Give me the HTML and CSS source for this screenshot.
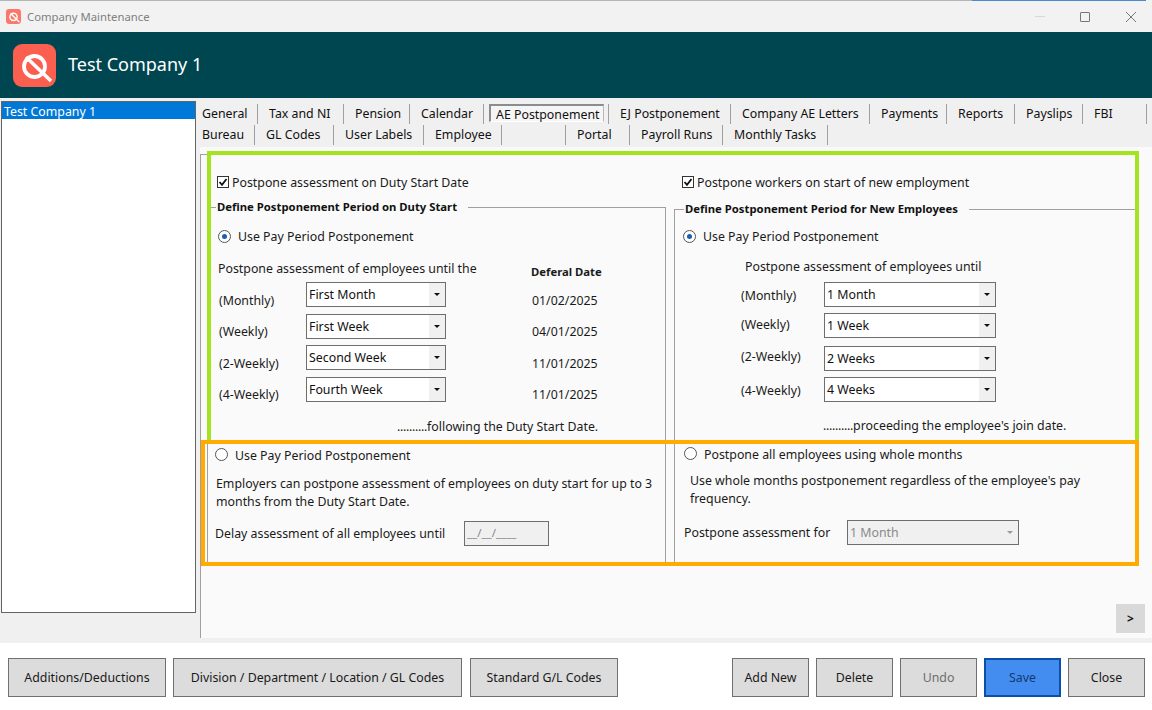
FILE: index.html
```html
<!DOCTYPE html>
<html lang="en">
<head>
    <meta charset="UTF-8">
    <meta name="viewport" content="width=device-width, initial-scale=1.0">
    <title>Company Maintenance</title>
    <link rel="stylesheet" href="styles.css">
</head>
<body>
    <div class="window">
        <div class="top-strip"></div>
        <div class="titlebar">
            <svg class="title-icon" viewBox="0 0 43 43">
                <rect width="43" height="43" rx="9" fill="#f9786a"/>
                <circle cx="21.5" cy="22.5" r="10.5" fill="none" stroke="#fff" stroke-width="4"/>
                <path d="M13 13 L38 37" stroke="#fff" stroke-width="4"/>
            </svg>
            <span class="title-text">Company Maintenance</span>
            <div class="window-controls">
                <span class="win-min"></span>
                <span class="win-max"></span>
                <svg class="win-close" viewBox="0 0 10 10"><path d="M0 0 L10 10 M10 0 L0 10" stroke="#777" stroke-width="1"/></svg>
            </div>
        </div>

        <header class="company-header">
            <svg class="company-logo" viewBox="0 0 43 43">
                <rect width="43" height="43" rx="9" fill="#fb5f50"/>
                <circle cx="21.5" cy="22.5" r="10.5" fill="none" stroke="#fff" stroke-width="3.8"/>
                <path d="M13 13 L38 37" stroke="#fff" stroke-width="3.5"/>
            </svg>
            <h1>Test Company 1</h1>
        </header>

        <main class="main">
            <aside class="company-list">
                <div class="company-item">Test Company 1</div>
            </aside>

            <section class="content">
                <nav class="tabs tabs-first">
                    <a class="tab">General</a>
                    <a class="tab">Tax and NI</a>
                    <a class="tab">Pension</a>
                    <a class="tab">Calendar</a>
                    <a class="tab tab-active"><span>AE Postponement</span></a>
                    <a class="tab">EJ Postponement</a>
                    <a class="tab">Company AE Letters</a>
                    <a class="tab">Payments</a>
                    <a class="tab">Reports</a>
                    <a class="tab">Payslips</a>
                    <a class="tab">FBI</a>
                </nav>
                <nav class="tabs tabs-second">
                    <a class="tab">Bureau</a>
                    <a class="tab">GL Codes</a>
                    <a class="tab">User Labels</a>
                    <a class="tab">Employee</a>
                    <a class="tab"></a>
                    <a class="tab">Portal</a>
                    <a class="tab">Payroll Runs</a>
                    <a class="tab">Monthly Tasks</a>
                </nav>

                <div class="panel">
                    <div class="column column-left">
                        <label class="check-row">
                            <svg class="checkbox" viewBox="0 0 12 12"><rect x="0.5" y="0.5" width="11" height="11" fill="#fff" stroke="#333"/><path d="M2.5 6 L5 8.8 L9.5 3" fill="none" stroke="#111" stroke-width="1.8"/></svg>
                            Postpone assessment on Duty Start Date
                        </label>
                        <fieldset class="group">
                            <legend>Define Postponement Period on Duty Start</legend>

                            <div class="radio-row"><span class="radio radio-on"></span>Use Pay Period Postponement</div>

                            <div class="period-head">
                                <span>Postpone assessment of employees until the</span>
                                <strong>Deferal Date</strong>
                            </div>
                            <div class="period-row">
                                <span class="period-label">(Monthly)</span>
                                <div class="combo"><span>First Month</span><i></i></div>
                                <span class="period-date">01/02/2025</span>
                            </div>
                            <div class="period-row">
                                <span class="period-label">(Weekly)</span>
                                <div class="combo"><span>First Week</span><i></i></div>
                                <span class="period-date">04/01/2025</span>
                            </div>
                            <div class="period-row">
                                <span class="period-label">(2-Weekly)</span>
                                <div class="combo"><span>Second Week</span><i></i></div>
                                <span class="period-date">11/01/2025</span>
                            </div>
                            <div class="period-row">
                                <span class="period-label">(4-Weekly)</span>
                                <div class="combo"><span>Fourth Week</span><i></i></div>
                                <span class="period-date">11/01/2025</span>
                            </div>
                            <p class="period-note"><span class="dots">..........</span>following the Duty Start Date.</p>

                            <div class="radio-row radio-row-lower"><span class="radio"></span>Use Pay Period Postponement</div>
                            <p class="explain">Employers can postpone assessment of employees on duty start for up to 3 months from the Duty Start Date.</p>
                            <div class="delay-row">
                                <span>Delay assessment of all employees until</span>
                                <div class="date-input">__/__/____</div>
                            </div>
                        </fieldset>
                    </div>

                    <div class="column column-right">
                        <label class="check-row">
                            <svg class="checkbox" viewBox="0 0 12 12"><rect x="0.5" y="0.5" width="11" height="11" fill="#fff" stroke="#333"/><path d="M2.5 6 L5 8.8 L9.5 3" fill="none" stroke="#111" stroke-width="1.8"/></svg>
                            Postpone workers on start of new employment
                        </label>
                        <fieldset class="group">
                            <legend>Define Postponement Period for New Employees</legend>

                            <div class="radio-row"><span class="radio radio-on"></span>Use Pay Period Postponement</div>

                            <div class="period-head">
                                <span>Postpone assessment of employees until</span>
                            </div>
                            <div class="period-row">
                                <span class="period-label label-low">(Monthly)</span>
                                <div class="combo"><span>1 Month</span><i></i></div>
                            </div>
                            <div class="period-row row-tall">
                                <span class="period-label">(Weekly)</span>
                                <div class="combo"><span>1 Week</span><i></i></div>
                            </div>
                            <div class="period-row">
                                <span class="period-label label-high">(2-Weekly)</span>
                                <div class="combo"><span>2 Weeks</span><i></i></div>
                            </div>
                            <div class="period-row">
                                <span class="period-label label-low">(4-Weekly)</span>
                                <div class="combo"><span>4 Weeks</span><i></i></div>
                            </div>
                            <p class="period-note"><span class="dots">..........</span>proceeding the employee's join date.</p>

                            <div class="radio-row radio-row-lower"><span class="radio"></span>Postpone all employees using whole months</div>
                            <p class="explain">Use whole months postponement regardless of the employee's pay frequency.</p>
                            <div class="delay-row">
                                <span>Postpone assessment for</span>
                                <div class="combo combo-disabled"><span>1 Month</span><i></i></div>
                            </div>
                        </fieldset>
                    </div>

                    <div class="mark mark-green"></div>
                    <div class="mark mark-orange"></div>
                    <button class="next-btn">&gt;</button>
                </div>
            </section>
        </main>

        <footer class="footer">
            <div class="footer-group">
                <button class="btn btn-additions">Additions/Deductions</button>
                <button class="btn btn-division">Division / Department / Location / GL Codes</button>
                <button class="btn btn-standard">Standard G/L Codes</button>
            </div>
            <div class="footer-group">
                <button class="btn">Add New</button>
                <button class="btn">Delete</button>
                <button class="btn btn-disabled">Undo</button>
                <button class="btn btn-save">Save</button>
                <button class="btn">Close</button>
            </div>
        </footer>
    </div>
</body>
</html>
```

FILE: styles.css
```css
* {
    box-sizing: border-box;
}
body {
    margin: 0;
    font-family: "Noto Sans", sans-serif;
    font-size: 12.35px;
    line-height: 18px;
    color: #1a1a1a;
    background-color: #fff;
}
.window {
    width: 1152px;
    height: 710px;
    overflow: hidden;
}

/* title bar */
.top-strip {
    height: 1px;
    background: linear-gradient(to right, #b5b5b5 972px, #4a8ad0 972px, #4a8ad0 1146px, #f2f2f2 1146px);
}
.titlebar {
    height: 31px;
    display: flex;
    align-items: center;
    padding-left: 6px;
    background-color: #f2f2f2;
}
.title-icon {
    width: 15px;
    height: 15px;
}
.title-text {
    margin-left: 6px;
    font-size: 11.3px;
    color: #808080;
}
.window-controls {
    margin-left: auto;
    display: flex;
    align-items: center;
    padding-right: 16px;
}
.win-min {
    width: 10px;
    height: 1px;
    background-color: #d8d8d8;
    margin-right: 35px;
}
.win-max {
    width: 10px;
    height: 10px;
    border: 1px solid #777;
    border-radius: 1px;
    margin-right: 36px;
}
.win-close {
    width: 10px;
    height: 10px;
}

/* teal header */
.company-header {
    height: 66px;
    display: flex;
    align-items: center;
    padding-left: 13px;
    background-color: #004651;
}
.company-logo {
    width: 43px;
    height: 43px;
}
.company-header h1 {
    margin: 0 0 2px 12px;
    font-size: 18px;
    font-weight: 400;
    color: #fff;
}

/* main area */
.main {
    height: 545px;
    display: flex;
    background-color: #f0f0f0;
}
.company-list {
    width: 195px;
    height: 512px;
    margin: 3px 0 0 1px;
    border: 1px solid #646464;
    background-color: #fff;
}
.company-item {
    height: 17px;
    line-height: 19px;
    padding-left: 2px;
    color: #fff;
    background-color: #0078d7;
}
.content {
    flex: 1;
    min-width: 0;
    margin-left: 4px;
    padding-top: 6px;
    height: 540px;
    display: flex;
    flex-direction: column;
}

/* tabs */
.tabs {
    display: grid;
    height: 18px;
    margin-left: 2px;
    margin-bottom: 3px;
}
.tabs-first {
    grid-template-columns: 56px 86px 66px 74px 125px 122px 139px 77px 68px 68px 64px;
}
.tabs-second {
    grid-template-columns: 53px 79px 90px 78px 64px 64px 93px 105px;
}
.tab {
    padding-left: 11px;
    border-right: 1px solid #a0a0a0;
    line-height: 20px;
    white-space: nowrap;
    color: #111;
}
.tab:first-child {
    padding-left: 0;
}
.tab-active {
    padding: 0 4px 0 5px;
}
.tab-active span {
    display: block;
    height: 18px;
    padding: 0 0 0 5px;
    line-height: 17px;
    border: 1px solid #fff;
    border-top: 2px solid #8c8c8c;
    border-left: 2px solid #8c8c8c;
    border-right: 1px solid #b8b8b8;
    background-color: #f5f5f5;
}

/* tab page */
.panel {
    position: relative;
    flex: 1;
    margin-top: 1px;
    display: flex;
    background-color: #fafafa;
}
.panel::before {
    content: "";
    position: absolute;
    left: 0;
    top: 7px;
    bottom: 0;
    width: 8px;
    border-left: 1px solid #a0a0a0;
    border-top: 1px solid #a0a0a0;
}
.column {
    height: 416px;
    margin-top: 26px;
}
.column-left {
    width: 459px;
    margin-left: 7px;
}
.column-right {
    width: 462px;
    margin-left: 8px;
}
.check-row {
    display: flex;
    align-items: center;
    height: 20px;
    padding-left: 10px;
    gap: 3px;
}
.column-right .check-row {
    padding-left: 8px;
}
.checkbox {
    width: 12px;
    height: 12px;
    margin-bottom: 2px;
}
.group {
    margin: 4px 0 0;
    padding: 0;
    height: 367px;
    border: 1px solid #a0a0a0;
    min-width: 0;
}
.group legend {
    margin-left: 8px;
    padding: 0 11px 0 1px;
    font-size: 11.3px;
    line-height: 20px;
    font-weight: 700;
    color: #111;
}
.column-right .group {
    margin-top: 6px;
    height: 365px;
}
.column-right .group legend {
    margin-left: 9px;
}

/* radio rows */
.radio-row {
    display: flex;
    align-items: center;
    height: 18px;
    margin: 11px 0 0 10px;
    gap: 7px;
}
.radio {
    width: 13px;
    height: 13px;
    margin-bottom: 2px;
    border: 1px solid #555;
    border-radius: 50%;
    background-color: #fff;
    position: relative;
}
.radio-on::after {
    content: "";
    position: absolute;
    left: 3px;
    top: 3px;
    width: 5px;
    height: 5px;
    border-radius: 50%;
    background-color: #1a5fb4;
}
.radio-row-lower {
    margin: 11px 0 0 7px;
}
.radio-row-lower .radio {
    margin-bottom: 4px;
}
.column-right .radio-row {
    margin: 9px 0 0 8px;
}
.column-right .radio-row-lower {
    margin: 11px 0 0 9px;
}

/* period rows */
.period-head {
    display: grid;
    grid-template-columns: 313px 1fr;
    height: 22px;
    margin: 14px 0 0 10px;
}
.period-head strong {
    font-size: 11.3px;
    padding-top: 3px;
}
.period-row {
    display: grid;
    grid-template-columns: 87px 140px 1fr;
    height: 31.5px;
    margin-left: 11px;
}
.period-label {
    padding-top: 9.6px;
}
.period-date {
    padding: 9.6px 0 0 86px;
}
.period-note {
    margin: 10px 0 0;
    padding-left: 189px;
}
.dots {
    letter-spacing: -0.3px;
}
.column-right .period-head {
    height: 24px;
    margin: 12px 0 0 70px;
}
.column-right .period-row {
    grid-template-columns: 83px 172px;
    height: 31px;
    margin-left: 66px;
}
.column-right .row-tall {
    height: 33px;
}
.column-right .period-label {
    padding-top: 3px;
}
.column-right .label-low {
    padding-top: 5px;
}
.column-right .label-high {
    padding-top: 2px;
}
.column-right .period-note {
    margin-top: 9px;
    padding-left: 148px;
}

/* combo boxes */
.combo {
    display: flex;
    height: 25px;
    border: 1px solid #6e6e6e;
    background-color: #fff;
    color: #111;
}
.combo span {
    flex: 1;
    padding: 2px 0 0 2px;
    line-height: 20px;
}
.combo i {
    width: 16px;
    background-color: #f0f0f0;
    position: relative;
}
.combo i::after {
    content: "";
    position: absolute;
    left: 5px;
    top: 10px;
    border: 3px solid transparent;
    border-top: 3px solid #111;
    border-bottom: 0;
}
.combo-disabled {
    width: 172px;
    background-color: #f0f0f0;
    color: #8a8a8a;
}
.combo-disabled i::after {
    border-top-color: #999;
}

/* lower part of the groups */
.explain {
    margin: 10px 0 0 8px;
    width: 445px;
    line-height: 17.5px;
}
.delay-row {
    display: flex;
    align-items: center;
    margin: 11px 0 0 7px;
}
.delay-row > span {
    width: 249px;
    white-space: nowrap;
}
.date-input {
    width: 85px;
    height: 25px;
    padding: 2px 0 0 2px;
    border: 1px solid #6e6e6e;
    background-color: #f0f0f0;
    font-size: 11.5px;
    color: #888;
}
.column-right .explain {
    margin: 8px 0 0 15px;
    width: 420px;
}
.column-right .delay-row {
    margin: 13px 0 0 9px;
}
.column-right .delay-row > span {
    width: 163px;
}

/* highlight frames laid over the screen */
.mark {
    position: absolute;
    border-style: solid;
    pointer-events: none;
}
.mark-green {
    left: 7px;
    top: 4px;
    width: 932px;
    height: 293px;
    border-width: 4px;
    border-color: #a3e41f;
}
.mark-orange {
    left: 1px;
    top: 293px;
    width: 938px;
    height: 126px;
    border-width: 4px;
    border-color: #ffab00;
}
.next-btn {
    position: absolute;
    right: 7px;
    bottom: 5px;
    width: 29px;
    height: 29px;
    padding: 0;
    border: 0;
    background-color: #d9d9d9;
    font-family: inherit;
    font-weight: 700;
    font-size: 12px;
    color: #111;
}

/* footer buttons */
.footer {
    height: 67px;
    display: flex;
    justify-content: space-between;
    padding: 15px 7px 0 8px;
    background-color: #fff;
}
.footer-group {
    display: flex;
    gap: 7px;
}
.btn {
    width: 77px;
    height: 39px;
    padding: 0;
    border: 1px solid #707070;
    background-color: #dcdcdc;
    font-family: inherit;
    font-size: 12.35px;
    color: #1a1a1a;
}
.btn-additions {
    width: 158px;
}
.btn-division {
    width: 289px;
}
.btn-standard {
    width: 148px;
    margin-left: 1px;
}
.btn-disabled {
    color: #6f6f6f;
}
.btn-save {
    border: 2px solid #0a50a8;
    background-color: #448df0;
    color: #123a70;
}
```
